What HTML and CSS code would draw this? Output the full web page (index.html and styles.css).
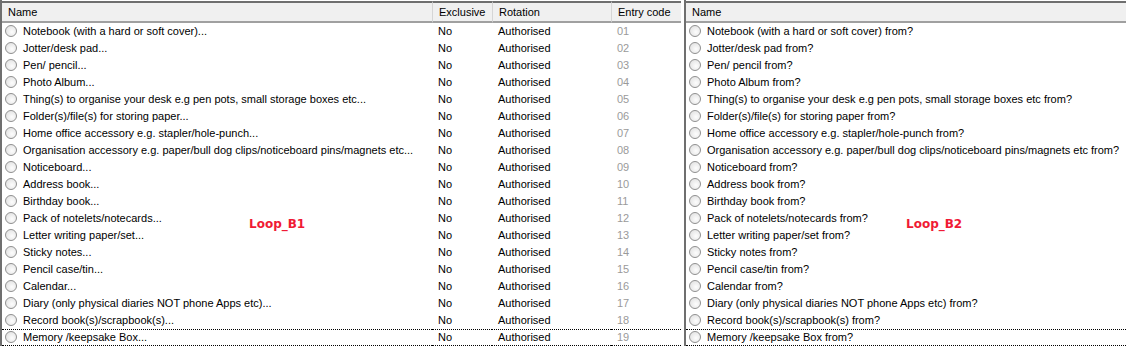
FILE: index.html
```html
<!DOCTYPE html>
<html lang="en">
<head>
    <meta charset="UTF-8">
    <title>Loop grids</title>
    <link rel="stylesheet" href="styles.css">
</head>
<body>
    <div class="screen">
        <!-- Loop B1 -->
        <div class="panel panel-left">
            <table class="grid">
                <colgroup>
                    <col class="c-name">
                    <col class="c-excl">
                    <col class="c-rot">
                    <col class="c-code">
                </colgroup>
                <thead>
                    <tr>
                        <th>Name</th>
                        <th>Exclusive</th>
                        <th>Rotation</th>
                        <th>Entry code</th>
                    </tr>
                </thead>
                <tbody id="rowsB1"></tbody>
            </table>
            <div class="loop-label label-b1">Loop_B1</div>
        </div>

        <!-- Loop B2 -->
        <div class="panel panel-right">
            <table class="grid">
                <thead>
                    <tr><th>Name</th></tr>
                </thead>
                <tbody id="rowsB2"></tbody>
            </table>
            <div class="loop-label label-b2">Loop_B2</div>
        </div>
    </div>

    <script>
        const items = [
            "Notebook (with a hard or soft cover)",
            "Jotter/desk pad",
            "Pen/ pencil",
            "Photo Album",
            "Thing(s) to organise your desk e.g pen pots, small storage boxes etc",
            "Folder(s)/file(s) for storing paper",
            "Home office accessory e.g. stapler/hole-punch",
            "Organisation accessory e.g. paper/bull dog clips/noticeboard pins/magnets etc",
            "Noticeboard",
            "Address book",
            "Birthday book",
            "Pack of notelets/notecards",
            "Letter writing paper/set",
            "Sticky notes",
            "Pencil case/tin",
            "Calendar",
            "Diary (only physical diaries NOT phone Apps etc)",
            "Record book(s)/scrapbook(s)",
            "Memory /keepsake Box"
        ];

        const last = items.length - 1;

        document.getElementById('rowsB1').innerHTML = items.map((item, i) => `
            <tr class="${i === last ? 'focused' : ''}">
                <td><span class="radio"></span>${item}...</td>
                <td>No</td>
                <td>Authorised</td>
                <td class="code">${String(i + 1).padStart(2, '0')}</td>
            </tr>
        `).join('');

        document.getElementById('rowsB2').innerHTML = items.map((item, i) => `
            <tr class="${i === last ? 'focused' : ''}">
                <td><span class="radio"></span>${item} from?</td>
            </tr>
        `).join('');
    </script>
</body>
</html>
```

FILE: styles.css
```css
body {
    margin: 0;
    font-family: "Liberation Sans", Arial, sans-serif;
    font-size: 11px;
    color: #000;
    background: #fff;
}
.screen {
    display: flex;
    gap: 3px;
    width: 1126px;
    height: 346px;
    overflow: hidden;
}
.panel {
    position: relative;
    box-sizing: border-box;
    border-left: 2px solid #6f6f6f;
    padding-top: 1px;
    height: 346px;
}
.panel-left {
    width: 681px;
}
.panel-right {
    flex: 1;
}
.grid {
    width: 100%;
    border-collapse: separate;
    border-spacing: 0;
    table-layout: fixed;
}
.c-name { width: 430px; }
.c-excl { width: 60px; }
.c-rot { width: 119px; }
.c-code { width: 70px; }
.grid th {
    box-sizing: border-box;
    height: 22px;
    padding: 0 0 0 6px;
    text-align: left;
    font-weight: normal;
    background: #f0f0f0;
    border-top: 2px solid #6f6f6f;
    border-bottom: 2px solid #a0a0a0;
    border-left: 1px solid #d5d5d5;
    white-space: nowrap;
    line-height: 17px;
}
.grid th:first-child {
    border-left: none;
}
.grid td {
    box-sizing: border-box;
    height: 17px;
    padding: 0 0 0 6px;
    white-space: nowrap;
    overflow: hidden;
    line-height: 17px;
}
.grid td:first-child {
    padding-left: 3px;
}
.grid td.code {
    color: #9a9a9a;
}
.radio {
    display: inline-block;
    width: 10px;
    height: 10px;
    border: 1px solid #8f8f8f;
    border-radius: 50%;
    background: radial-gradient(circle at 60% 60%, #fdfdfd 0%, #e6e6e6 70%, #d0d0d0 100%);
    vertical-align: -2px;
    margin-right: 6px;
}
.focused td {
    line-height: 15px;
    border-top: 1px dotted #000;
    border-bottom: 1px dotted #000;
}
.loop-label {
    position: absolute;
    font-family: "DejaVu Sans", Verdana, sans-serif;
    font-weight: bold;
    font-size: 12px;
    color: #f01a34;
}
.label-b1 {
    left: 247px;
    top: 217px;
}
.label-b2 {
    left: 220px;
    top: 217px;
}
```
